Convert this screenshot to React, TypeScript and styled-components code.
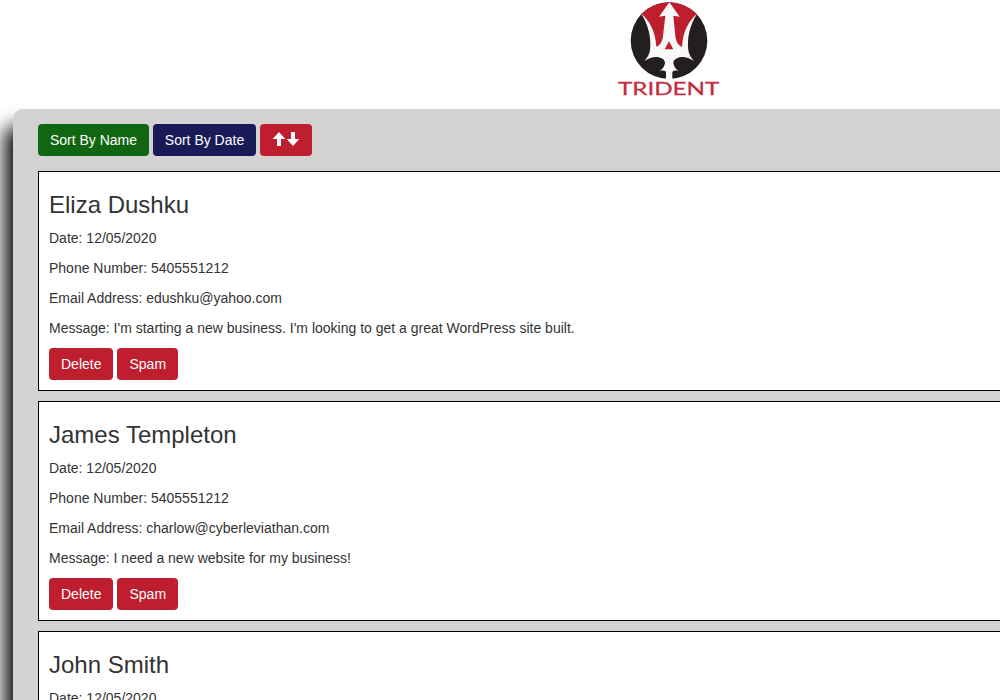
import React from "react";
import styled, { createGlobalStyle } from "styled-components";

const GlobalStyle = createGlobalStyle`
  *, *::before, *::after { box-sizing: border-box; }
  html, body { margin: 0; padding: 0; height: 100%; overflow: hidden; background: #fff; }
  body {
    font-family: "Liberation Sans", Arial, Helvetica, sans-serif;
    font-size: 14px;
    line-height: 20px;
    color: #333;
  }
`;

const Viewport = styled.div`
  height: 700px;
  overflow: hidden;
`;

const Page = styled.div`
  width: 1338px;
`;

const Header = styled.header`
  display: flex;
  justify-content: center;
  height: 109px;
  padding-left: 2px;
`;

const LogoImage = styled.svg`
  display: block;
  width: 120px;
  height: 105px;
`;

const Panel = styled.main`
  display: flex;
  flex-direction: column;
  gap: 10px;
  margin: 0 13px;
  padding: 15px 25px;
  background: #d3d3d3;
  border-radius: 10px;
  box-shadow: -11px 15px 19px -3px #000;
`;

const Toolbar = styled.div`
  display: flex;
  gap: 4px;
  margin-bottom: 5px;
`;

const Button = styled.button<{ $color?: string; $width?: number }>`
  display: inline-flex;
  align-items: center;
  justify-content: center;
  width: ${({ $width }) => ($width ? `${$width}px` : "auto")};
  height: 32px;
  padding: ${({ $width }) => ($width ? "6px 0" : "6px 12px")};
  border: 0;
  border-radius: 4px;
  background: ${({ $color = "#be1e2d" }) => $color};
  color: #fff;
  font: inherit;
  white-space: nowrap;
`;

const Arrow = styled.svg`
  display: block;
  width: 14px;
  height: 14px;
  position: relative;
  top: -1px;
`;

const Card = styled.article`
  height: 220px;
  padding: 10px;
  border: 1px solid #000;
  background: #fff;
`;

const Name = styled.h3`
  margin: 10px 0;
  font-size: 24px;
  font-weight: 400;
  line-height: 26.4px;
`;

const Field = styled.p`
  margin: 0 0 10px;
`;

const Actions = styled.div`
  display: flex;
  gap: 4px;
`;

const contacts = [
  {
    name: "Eliza Dushku",
    date: "12/05/2020",
    phone: "5405551212",
    email: "edushku@yahoo.com",
    message: "I'm starting a new business. I'm looking to get a great WordPress site built.",
  },
  {
    name: "James Templeton",
    date: "12/05/2020",
    phone: "5405551212",
    email: "charlow@cyberleviathan.com",
    message: "I need a new website for my business!",
  },
  { name: "John Smith", date: "12/05/2020" },
];

function Logo() {
  return (
    <LogoImage viewBox="0 0 360 315" role="img" aria-label="Trident">
      <defs>
        <clipPath id="disc">
          <circle cx="177" cy="122" r="115" />
        </clipPath>
      </defs>
      <g clipPath="url(#disc)">
        <rect width="360" height="250" fill="#231f20" />
        <path
          d="M94 41V0H261V41C242 68 231 96 228 148H127C124 96 113 68 94 41Z"
          fill="#be1e2d"
        />
      </g>
      <path
        d="M94 41C117 62 136 90 139 140C149 138 157 126 159 108L166 47L147 50L178 7L209 50L190 47L196 108C198 126 206 138 216 140C219 90 238 62 261 41C239 78 231 112 235 151C237 163 243 174 252 183C238 174 226 170 214 171C200 173 189 180 190 190C192 200 197 208 206 213C198 211 192 211 187 215V238H168V215C163 211 156 211 148 213C158 208 163 200 165 190C166 180 155 172 141 171C129 170 118 174 103 183C112 174 118 163 120 151C124 112 116 78 94 41Z"
        fill="#f8f8f8"
      />
      <path d="M177 124L190 148H164Z" fill="#be1e2d" />
      <text
        x="24"
        y="284"
        fill="#c52b3c"
        stroke="#c52b3c"
        strokeWidth="0.8"
        fontFamily="Lato, sans-serif"
        fontSize="54"
        textLength="304"
        lengthAdjust="spacingAndGlyphs"
      >
        TRIDENT
      </text>
    </LogoImage>
  );
}

function SortArrow({ down = false }: { down?: boolean }) {
  return (
    <Arrow viewBox="0 0 14 14" aria-hidden="true">
      <path
        d={down ? "M5 0H9V7H13.3L7 14L0.7 7H5Z" : "M7 0L13.3 7H9V14H5V7H0.7Z"}
        fill="#fff"
      />
    </Arrow>
  );
}

export default function App() {
  return (
    <Viewport>
      <GlobalStyle />
      <Page>
        <Header>
          <Logo />
        </Header>
        <Panel>
          <Toolbar>
            <Button $color="#116611" $width={111}>Sort By Name</Button>
            <Button $color="#191b58" $width={103}>Sort By Date</Button>
            <Button $width={52} aria-label="Reverse order">
              <SortArrow />
              <SortArrow down />
            </Button>
          </Toolbar>
          {contacts.map((c) => (
            <Card key={c.name}>
              <Name>{c.name}</Name>
              <Field>Date: {c.date}</Field>
              {c.phone && <Field>Phone Number: {c.phone}</Field>}
              {c.email && <Field>Email Address: {c.email}</Field>}
              {c.message && (
                <>
                  <Field>Message: {c.message}</Field>
                  <Actions>
                    <Button>Delete</Button>
                    <Button>Spam</Button>
                  </Actions>
                </>
              )}
            </Card>
          ))}
        </Panel>
      </Page>
    </Viewport>
  );
}
